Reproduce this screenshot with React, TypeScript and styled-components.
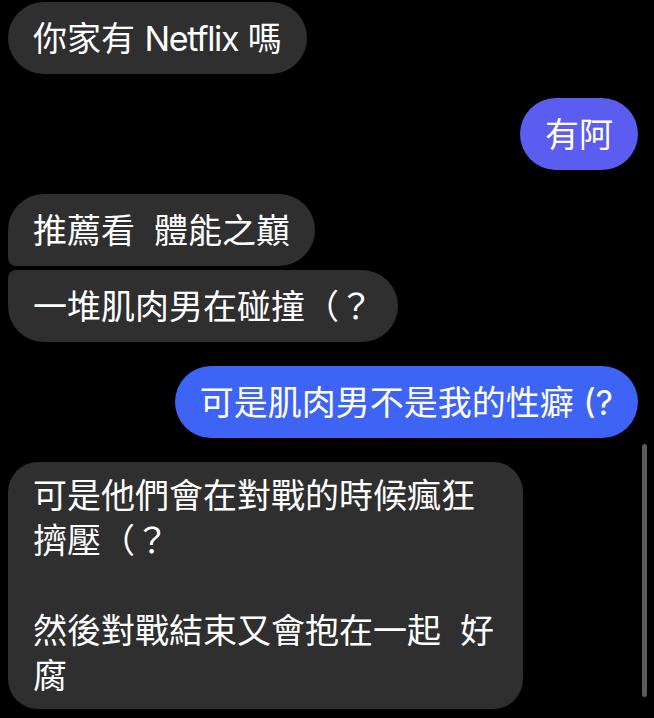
import React from "react";
import styled, { createGlobalStyle, css } from "styled-components";

const GlobalStyle = createGlobalStyle`
  html, body {
    margin: 0;
    padding: 0;
    background: #000;
  }
  body {
    font-family: "Inter", "Noto Sans CJK TC", "Noto Sans", sans-serif;
    -webkit-font-smoothing: antialiased;
  }
`;

const Screen = styled.div`
  position: relative;
  width: 654px;
  height: 718px;
  overflow: hidden;
  background: #000;
`;

const Thread = styled.div`
  display: flex;
  flex-direction: column;
  gap: 24px;
  padding: 2px 16px 0 8px;
`;

const Group = styled.div<{ $mine?: boolean }>`
  display: flex;
  flex-direction: column;
  gap: 4px;
  align-items: ${(p) => (p.$mine ? "flex-end" : "flex-start")};
`;

type Corner = "single" | "first" | "last";

const Bubble = styled.div<{ $tone: "gray" | "purple" | "blue"; $corner?: Corner; $multi?: boolean }>`
  box-sizing: border-box;
  max-width: 515px;
  font-size: 34px;
  line-height: 45px;
  color: #fff;
  white-space: pre-wrap;
  padding: 13.5px 25px;
  border-radius: 36px;
  background: ${(p) =>
    p.$tone === "purple" ? "#5b5cf0" : p.$tone === "blue" ? "#3e64f6" : "#2f2f2f"};
  ${(p) =>
    p.$corner === "first" &&
    css`
      border-bottom-left-radius: 8px;
    `}
  ${(p) =>
    p.$corner === "last" &&
    css`
      border-top-left-radius: 8px;
    `}
  ${(p) =>
    p.$multi &&
    css`
      padding: 11px 20px 11px 25px;
      border-radius: 30px;
    `}
`;

const Latin = styled.span`
  letter-spacing: -1.4px;
`;

const ScrollThumb = styled.div`
  position: absolute;
  right: 7px;
  top: 444px;
  width: 5px;
  height: 253px;
  border-radius: 3px;
  background: #5b5b5b;
`;

export default function App() {
  return (
    <Screen>
      <GlobalStyle />
      <Thread>
        <Group>
          <Bubble $tone="gray">
            你家有 <Latin>Netflix</Latin> 嗎
          </Bubble>
        </Group>
        <Group $mine>
          <Bubble $tone="purple">有阿</Bubble>
        </Group>
        <Group>
          <Bubble $tone="gray" $corner="first">推薦看  體能之巔</Bubble>
          <Bubble $tone="gray" $corner="last">一堆肌肉男在碰撞（？</Bubble>
        </Group>
        <Group $mine>
          <Bubble $tone="blue">可是肌肉男不是我的性癖 (?</Bubble>
        </Group>
        <Group>
          <Bubble $tone="gray" $multi>
            {"可是他們會在對戰的時候瘋狂擠壓（？\n\n然後對戰結束又會抱在一起  好腐"}
          </Bubble>
        </Group>
      </Thread>
      <ScrollThumb />
    </Screen>
  );
}
